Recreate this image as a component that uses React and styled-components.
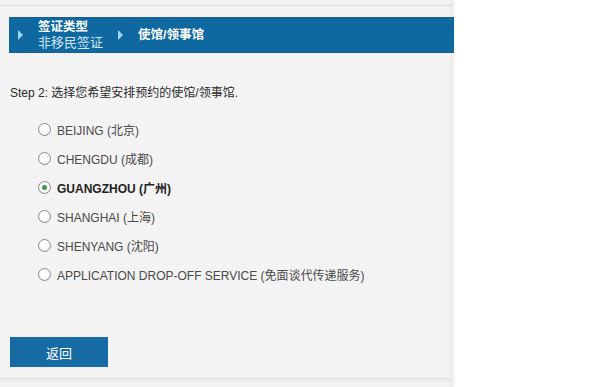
import React from "react";
import styled, { createGlobalStyle } from "styled-components";

const Global = createGlobalStyle`
  html, body { margin: 0; padding: 0; background: #ffffff; }
  body { font-family: "Liberation Sans", Arial, "Noto Sans CJK SC", sans-serif; }
`;

const Panel = styled.div`
  width: 455px;
  height: 387px;
  background: linear-gradient(to right, #f3f3f3 0, #f3f3f3 449px, #ebebeb 451px, #f0f0f0 453px, #fafafa 455px);
  display: flex;
  flex-direction: column;
`;

const DottedRule = styled.div`
  margin-top: 5px;
  margin-right: 4px;
  height: 0;
  border-top: 1px dotted #c4c4c4;
`;

const Breadcrumb = styled.div`
  margin: 11px 1px 0 9px;
  height: 34px;
  background: #0f69a0;
  border-top: 1px solid #1d5e86;
  border-bottom: 1px solid #1d5e86;
  display: flex;
  align-items: center;
  padding-left: 9px;
`;

const Crumb = styled.div`
  display: flex;
  align-items: center;
  margin-right: ${(p) => p.$mr || 0}px;
`;

const Arrow = styled.span`
  width: 0;
  height: 0;
  border-top: 5px solid transparent;
  border-bottom: 5px solid transparent;
  border-left: 5px solid #9dd6f2;
  margin-right: 15px;
`;

const CrumbText = styled.div`
  display: flex;
  flex-direction: column;
  line-height: 16px;
  font-size: 12px;
`;

const CrumbTitle = styled.span`
  color: #ffffff;
  font-weight: bold;
  font-size: 12.5px;
`;

const CrumbSub = styled.span`
  color: #cfe7f6;
  font-size: 13px;
`;

const StepText = styled.div`
  margin: 32px 0 0 10px;
  font-size: 12px;
  color: #2a2a2a;
  line-height: 16px;
`;

const OptionList = styled.div`
  margin: 20px 0 0 38px;
  display: flex;
  flex-direction: column;
  gap: 13px;
`;

const Option = styled.label`
  display: flex;
  align-items: center;
  height: 16px;
  font-size: 12px;
  color: ${(p) => (p.$checked ? "#222222" : "#4a4a4a")};
  font-weight: ${(p) => (p.$checked ? "bold" : "normal")};
`;

const Radio = styled.span`
  width: 11px;
  height: 11px;
  border-radius: 50%;
  border: 1px solid #8a8a8a;
  background: radial-gradient(circle at 50% 40%, #ffffff 40%, #e2e2e2 100%);
  margin-right: 6px;
  display: flex;
  align-items: center;
  justify-content: center;
  box-sizing: content-box;
  &::after {
    content: "";
    width: 5px;
    height: 5px;
    border-radius: 50%;
    background: ${(p) => (p.$checked ? "#3f9a4c" : "transparent")};
  }
`;

const Spacer = styled.div`
  flex: 1;
`;

const BackButton = styled.button`
  margin: 0 0 0 10px;
  width: 98px;
  height: 30px;
  border: none;
  background: #176ba5;
  color: #ffffff;
  font-family: "Liberation Sans", Arial, "Noto Sans CJK SC", sans-serif;
  font-size: 13px;
  padding: 0;
  cursor: pointer;
`;

const BottomRule = styled.div`
  margin-top: 11px;
  margin-right: 4px;
  height: 1px;
  border-top: 1px solid #dddddd;
  border-bottom: 1px solid #e6e6e6;
  margin-bottom: 6px;
`;

const options = [
  { label: "BEIJING (北京)" },
  { label: "CHENGDU (成都)" },
  { label: "GUANGZHOU (广州)", checked: true },
  { label: "SHANGHAI (上海)" },
  { label: "SHENYANG (沈阳)" },
  { label: "APPLICATION DROP-OFF SERVICE (免面谈代传递服务)" },
];

export default function App() {
  return (
    <>
      <Global />
      <Panel>
        <DottedRule />
        <Breadcrumb>
          <Crumb $mr={15}>
            <Arrow />
            <CrumbText>
              <CrumbTitle>签证类型</CrumbTitle>
              <CrumbSub>非移民签证</CrumbSub>
            </CrumbText>
          </Crumb>
          <Crumb>
            <Arrow />
            <CrumbText>
              <CrumbTitle>使馆/领事馆</CrumbTitle>
            </CrumbText>
          </Crumb>
        </Breadcrumb>
        <StepText>Step 2: 选择您希望安排预约的使馆/领事馆.</StepText>
        <OptionList>
          {options.map((o) => (
            <Option key={o.label} $checked={o.checked}>
              <Radio $checked={o.checked} />
              {o.label}
            </Option>
          ))}
        </OptionList>
        <Spacer />
        <BackButton>返回</BackButton>
        <BottomRule />
      </Panel>
    </>
  );
}
